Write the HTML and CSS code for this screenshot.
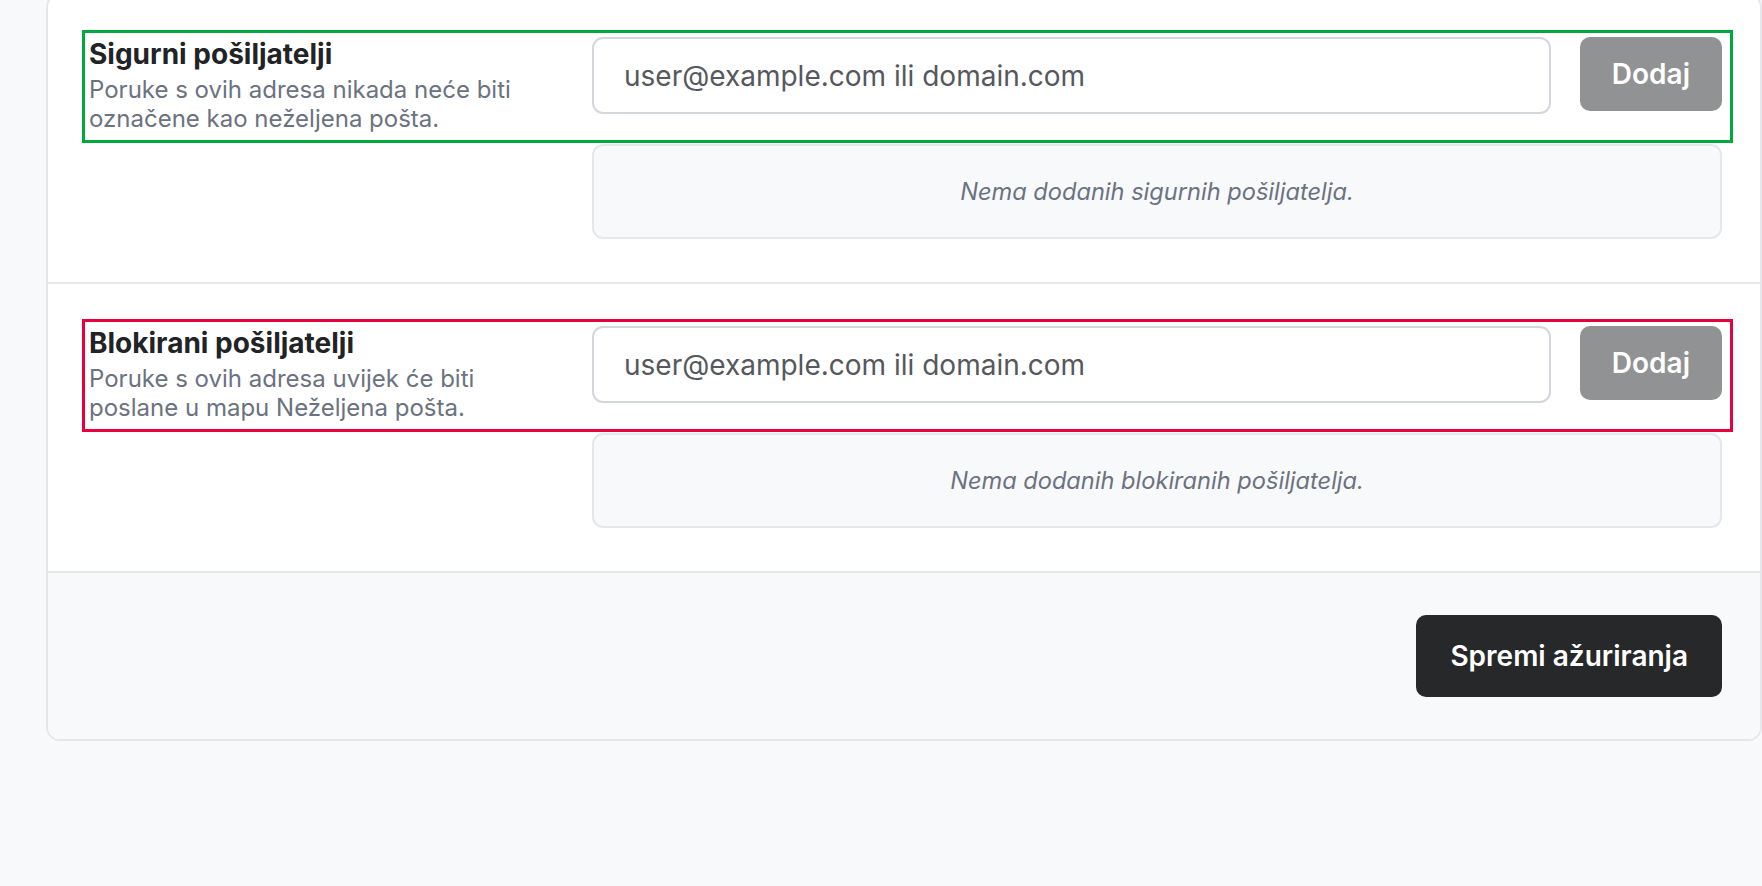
FILE: index.html
```html
<!DOCTYPE html>
<html lang="hr">
<head>
  <meta charset="UTF-8">
  <title>Postavke neželjene pošte</title>
  <link rel="stylesheet" href="styles.css">
</head>
<body>

<div class="page">
  <div class="card">

    <!-- Sigurni pošiljatelji -->
    <div class="sender-section">
      <div class="field-row field-row--safe">
        <div class="field-label">
          <h3 class="field-title">Sigurni pošiljatelji</h3>
          <p class="field-desc">Poruke s ovih adresa nikada neće biti označene kao neželjena pošta.</p>
        </div>
        <form class="add-form" onsubmit="return false;">
          <input type="text" class="add-input" placeholder="user@example.com ili domain.com">
          <button type="submit" class="btn-add">Dodaj</button>
        </form>
      </div>
      <div class="sender-list">
        <p class="sender-empty">Nema dodanih sigurnih pošiljatelja.</p>
      </div>
    </div>

    <!-- Blokirani pošiljatelji -->
    <div class="sender-section">
      <div class="field-row field-row--blocked">
        <div class="field-label">
          <h3 class="field-title">Blokirani pošiljatelji</h3>
          <p class="field-desc">Poruke s ovih adresa uvijek će biti poslane u mapu Neželjena pošta.</p>
        </div>
        <form class="add-form" onsubmit="return false;">
          <input type="text" class="add-input" placeholder="user@example.com ili domain.com">
          <button type="submit" class="btn-add">Dodaj</button>
        </form>
      </div>
      <div class="sender-list">
        <p class="sender-empty">Nema dodanih blokiranih pošiljatelja.</p>
      </div>
    </div>

    <div class="card-footer">
      <button class="btn-save">Spremi ažuriranja</button>
    </div>

  </div>
</div>

</body>
</html>
```

FILE: styles.css
```css
* {
  box-sizing: border-box;
}

body {
  margin: 0;
  background-color: #f8f9fb;
  color: #212326;
  font-family: Inter, "Noto Sans", sans-serif;
}

.page {
  padding-left: 46px;
}

.card {
  margin-top: -7px; /* vrh kartice je iznad vidljivog dijela */
  background-color: #fff;
  border: 2px solid #e5e7eb;
  border-radius: 14px;
  overflow: hidden;
}

.sender-section {
  padding: 35px 27px 43px 34px;
}

.sender-section + .sender-section {
  border-top: 2px solid #e5e7eb;
}

.field-row {
  display: grid;
  grid-template-columns: 460px 1fr;
  column-gap: 43px;
  padding: 4px 8px 7px 4px;
  border: 3px solid transparent;
}

.field-row--safe {
  border-color: #00a83e;
}

.field-row--blocked {
  border-color: #e8003d;
}

.field-title {
  margin: 0;
  font-size: 28px;
  line-height: 34px;
  font-weight: 700;
  color: #212326;
}

.field-desc {
  margin: 4px 0 0;
  font-size: 24px;
  line-height: 29px;
  color: #6b7280;
}

.add-form {
  display: flex;
  align-items: flex-start;
  gap: 29px;
  margin: 0;
}

.add-input {
  flex: 1;
  min-width: 0;
  height: 77px;
  padding: 0 20px 0 30px;
  border: 2px solid #d3d6db;
  border-radius: 11px;
  background-color: #fff;
  font: 400 28px Inter, "Noto Sans", sans-serif;
  color: #212326;
  outline: none;
}

.add-input::placeholder {
  color: #55585d;
  opacity: 1;
}

.btn-add {
  height: 74px;
  padding: 0 32px;
  border: none;
  border-radius: 10px;
  background-color: #919293;
  color: #fff;
  font: 600 28px Inter, "Noto Sans", sans-serif;
  cursor: not-allowed;
}

.sender-list {
  margin: 1px 11px 0 510px;
  padding: 28px 20px;
  background-color: #f8f9fb;
  border: 2px solid #e5e7eb;
  border-radius: 11px;
}

.sender-empty {
  margin: 0;
  text-align: center;
  font-size: 23.6px;
  line-height: 35px;
  font-style: italic;
  color: #6b7280;
}

.card-footer {
  display: flex;
  justify-content: flex-end;
  padding: 42px 38px;
  background-color: #f8f9fb;
  border-top: 2px solid #e5e7eb;
}

.btn-save {
  height: 82px;
  padding: 0 34px;
  border: none;
  border-radius: 10px;
  background-color: #27282a;
  color: #fff;
  font: 600 28px Inter, "Noto Sans", sans-serif;
  cursor: pointer;
}
```
